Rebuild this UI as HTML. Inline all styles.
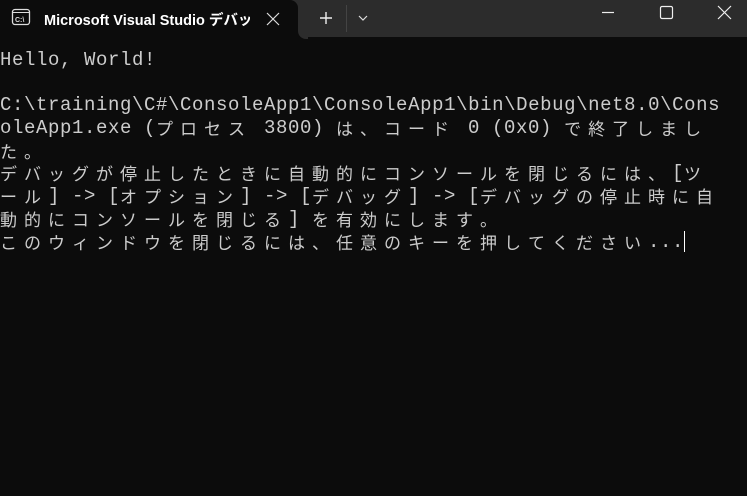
<!DOCTYPE html>
<html><head><meta charset="utf-8"><style>
html,body{margin:0;padding:0;width:747px;height:496px;overflow:hidden;background:#0c0c0c;}
.bar{position:absolute;left:0;top:0;width:747px;height:37px;background:#2c2c2c;}
.tab{position:absolute;left:0;top:0;width:298px;height:38px;background:#0c0c0c;border-top-right-radius:8px;}
.corner{position:absolute;left:298px;top:29px;width:10px;height:10px;background:#0c0c0c;}
.corner:after{content:"";position:absolute;left:0;top:0;width:10px;height:10px;background:#2c2c2c;border-bottom-left-radius:8px;}
.title{position:absolute;left:44px;top:9px;font:600 14.5px "Liberation Sans","Noto Sans CJK JP",sans-serif;color:#fff;white-space:nowrap;width:206px;overflow:hidden;}
.term{position:absolute;left:0;top:49px;font:19px "Liberation Mono","Noto Sans CJK JP",monospace;color:#cccccc;letter-spacing:0.6px;white-space:pre;}
.term div{height:22.7px;line-height:22.7px;}
.w{display:inline-block;width:24px;height:22.7px;line-height:22.7px;vertical-align:top;letter-spacing:0;font-family:"Noto Sans CJK JP",sans-serif;font-size:17px;}
.cur{display:inline-block;width:1px;height:21px;background:#fff;vertical-align:top;}
</style></head><body>
<div class="bar"></div>
<div class="tab"></div>
<div class="corner"></div>
<svg style="position:absolute;left:0;top:0" width="747" height="38">
<rect x="12.5" y="9.5" width="17" height="15" rx="2.5" fill="none" stroke="#ddd" stroke-width="1.3"/>
<line x1="13" y1="12.5" x2="29" y2="12.5" stroke="#ddd" stroke-width="1"/>
<text x="15" y="22" font-family="Liberation Sans" font-size="7" font-weight="bold" fill="#ddd">C:\</text>
<path d="M267 13 L279 25 M279 13 L267 25" stroke="#ddd" stroke-width="1.2"/>
<path d="M326 12 V24 M320 18 H332" stroke="#eee" stroke-width="1.4"/>
<line x1="346.5" y1="5" x2="346.5" y2="32" stroke="#444" stroke-width="1"/>
<path d="M359 16 L363 20 L367 16" stroke="#ddd" stroke-width="1.2" fill="none"/>
<line x1="602" y1="12.5" x2="614" y2="12.5" stroke="#eee" stroke-width="1.2"/>
<rect x="660.5" y="6.5" width="12" height="12" rx="1.5" fill="none" stroke="#eee" stroke-width="1.2"/>
<path d="M718 6 L731 19 M731 6 L718 19" stroke="#eee" stroke-width="1.2"/>
</svg>
<div class="title">Microsoft Visual Studio デバッグ コンソール</div>
<div class="term" id="t"><div>Hello, World!</div><div></div><div>C:\training\C#\ConsoleApp1\ConsoleApp1\bin\Debug\net8.0\Cons</div><div>oleApp1.exe (プロセス 3800) は、コード 0 (0x0) で終了しまし</div><div>た。</div><div>デバッグが停止したときに自動的にコンソールを閉じるには、[ツ</div><div>ール] -> [オプション] -> [デバッグ] -> [デバッグの停止時に自</div><div>動的にコンソールを閉じる] を有効にします。</div><div>このウィンドウを閉じるには、任意のキーを押してください...<span class="cur"></span></div></div>
<script>
(function(){var t=document.getElementById('t');var w=document.createTreeWalker(t,NodeFilter.SHOW_TEXT);var ns=[];while(w.nextNode())ns.push(w.currentNode);
ns.forEach(function(n){var s=n.nodeValue;if(!/[\u3000-\u9fff\uff00-\uffef]/.test(s))return;var f=document.createDocumentFragment();var buf='';
for(var i=0;i<s.length;i++){var c=s[i];if(/[\u3000-\u9fff\uff00-\uffef]/.test(c)){if(buf){f.appendChild(document.createTextNode(buf));buf='';}var sp=document.createElement('span');sp.className='w';sp.textContent=c;f.appendChild(sp);}else buf+=c;}
if(buf)f.appendChild(document.createTextNode(buf));n.parentNode.replaceChild(f,n);});})();
</script>
</body></html>
